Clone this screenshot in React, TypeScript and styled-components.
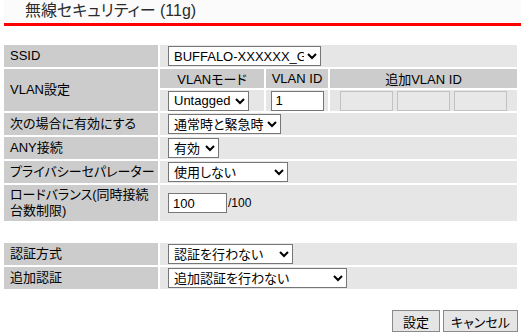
import React from 'react';
import styled, { createGlobalStyle } from 'styled-components';

const FONT = `"Liberation Sans", "Noto Sans CJK JP", sans-serif`;

interface Choice {
  label: string;
  value: string;
  width: number;
}

const basicRows: Choice[] = [
  { label: '次の場合に有効にする', value: '通常時と緊急時', width: 113 },
  { label: 'ANY接続', value: '有効', width: 51 },
  { label: 'プライバシーセパレーター', value: '使用しない', width: 120 },
];

const authRows: Choice[] = [
  { label: '認証方式', value: '認証を行わない', width: 125 },
  { label: '追加認証', value: '追加認証を行わない', width: 179 },
];

const App: React.FC = () => {
  return (
    <>
      <GlobalStyle />
      <Page>
        <Header>
          <Title>無線セキュリティー (11g)</Title>
        </Header>

        <FormTable>
          <Label>SSID</Label>
          <Value>
            <Select w={153} defaultValue="BUFFALO-XXXXXX_G">
              <option>BUFFALO-XXXXXX_G</option>
            </Select>
          </Value>

          <Label>VLAN設定</Label>
          <VlanGrid>
            <VlanHead>VLANモード</VlanHead>
            <VlanHead>VLAN ID</VlanHead>
            <VlanHead>追加VLAN ID</VlanHead>
            <VlanCell align="start">
              <Select w={81} defaultValue="Untagged">
                <option>Untagged</option>
                <option>Tagged</option>
              </Select>
            </VlanCell>
            <VlanCell>
              <TextInput w={53} defaultValue="1" />
            </VlanCell>
            <VlanCell>
              <ExtraIds>
                <TextInput w={53} disabled />
                <TextInput w={53} disabled />
                <TextInput w={53} disabled />
              </ExtraIds>
            </VlanCell>
          </VlanGrid>

          {basicRows.map((row) => (
            <React.Fragment key={row.label}>
              <Label>{row.label}</Label>
              <Value>
                <Select w={row.width} defaultValue={row.value}>
                  <option>{row.value}</option>
                </Select>
              </Value>
            </React.Fragment>
          ))}

          <Label tall>
            ロードバランス(同時接続
            <br />
            台数制限)
          </Label>
          <Value>
            <TextInput w={59} defaultValue="100" />
            <Suffix>/100</Suffix>
          </Value>
        </FormTable>

        <FormTable gapTop={22}>
          {authRows.map((row) => (
            <React.Fragment key={row.label}>
              <Label>{row.label}</Label>
              <Value>
                <Select w={row.width} defaultValue={row.value}>
                  <option>{row.value}</option>
                </Select>
              </Value>
            </React.Fragment>
          ))}
        </FormTable>

        <Actions>
          <Button w={48}>設定</Button>
          <Button w={75}>キャンセル</Button>
        </Actions>
      </Page>
    </>
  );
};

const GlobalStyle = createGlobalStyle`
  body {
    margin: 0;
    background: #fff;
    color: #000;
    font-family: ${FONT};
    font-feature-settings: "palt";
  }
  select, input, button {
    font-feature-settings: "palt";
  }
`;

const Page = styled.div`
  width: 521px;
  padding: 0 0 0 4px;
  box-sizing: border-box;
`;

const Header = styled.div`
  height: 23px;
  background: #fbfbfb;
  border-bottom: 3px solid #ff0000;
`;

const Title = styled.h1`
  margin: 0;
  padding-left: 21px;
  font-size: 16px;
  font-weight: normal;
  line-height: 22px;
  color: #2b2b2b;
`;

const FormTable = styled.div<{ gapTop?: number }>`
  display: grid;
  grid-template-columns: 154px 357px;
  gap: 2px;
  margin-top: ${(p) => p.gapTop ?? 19}px;
  background: #fff;
`;

const Label = styled.div<{ tall?: boolean }>`
  display: flex;
  align-items: center;
  min-height: ${(p) => (p.tall ? 36 : 22)}px;
  padding-left: 6px;
  background: #cccccc;
  font-size: 13px;
  line-height: 16px;
  white-space: nowrap;
`;

const Value = styled.div`
  display: flex;
  align-items: center;
  gap: 1px;
  min-height: 22px;
  padding-left: 8px;
  background: #e6e6e6;
  font-size: 13px;
`;

const VlanGrid = styled.div`
  display: grid;
  grid-template-columns: 104px 62px 1fr;
  grid-template-rows: 19px 21px;
  gap: 2px;
  background: #fff;
`;

const VlanHead = styled.div`
  display: flex;
  align-items: center;
  justify-content: center;
  background: #cccccc;
  font-size: 13px;
`;

const VlanCell = styled.div<{ align?: 'start' | 'center' }>`
  display: flex;
  align-items: center;
  justify-content: ${(p) => (p.align === 'start' ? 'flex-start' : 'center')};
  padding-left: ${(p) => (p.align === 'start' ? 8 : 0)}px;
  background: #e6e6e6;
`;

const ExtraIds = styled.div`
  display: flex;
  gap: 4px;
`;

const Select = styled.select<{ w: number }>`
  width: ${(p) => p.w}px;
  height: 20px;
  padding: 0 0 0 1px;
  font-family: ${FONT};
  font-size: 13px;
  color: #000;
  background: #fff;
`;

const TextInput = styled.input<{ w: number }>`
  width: ${(p) => p.w}px;
  height: 20px;
  box-sizing: border-box;
  padding: 0 4px;
  border: 1px solid #767676;
  border-radius: 0;
  background: #fff;
  font-family: ${FONT};
  font-size: 13px;
  color: #000;

  &:disabled {
    background: #e8e8e8;
    border-color: #c2c2c2;
  }
`;

const Suffix = styled.span`
  font-size: 12px;
`;

const Actions = styled.div`
  display: flex;
  justify-content: flex-end;
  gap: 3px;
  width: 514px;
  margin-top: 21px;
`;

const Button = styled.button<{ w: number }>`
  width: ${(p) => p.w}px;
  height: 22px;
  padding: 0;
  border: 1px solid #8a8a8a;
  border-radius: 0;
  background: #e5e5e5;
  font-family: ${FONT};
  font-size: 13px;
  color: #000;
`;

export default App;
